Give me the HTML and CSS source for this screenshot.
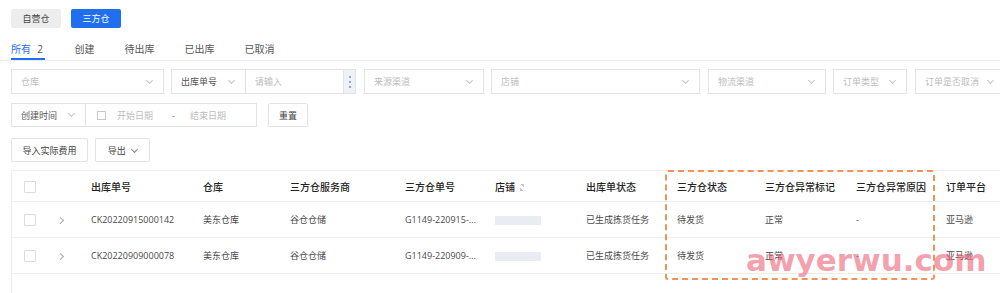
FILE: index.html
```html
<!DOCTYPE html>
<html lang="zh-CN">

<head>
    <meta charset="UTF-8">
    <title>出库单</title>
    <link rel="stylesheet" href="styles.css">
</head>

<body>
    <div class="page">
        <!-- warehouse switch -->
        <div class="switch">
            <button class="sw">自营仓</button>
            <button class="sw active">三方仓</button>
        </div>

        <!-- status tabs -->
        <div class="tabs">
            <span class="tab current">所有 <i class="count">2</i></span>
            <span class="tab">创建</span>
            <span class="tab">待出库</span>
            <span class="tab">已出库</span>
            <span class="tab">已取消</span>
        </div>

        <!-- filters -->
        <div class="filters">
            <div class="field w153"><span class="ph">仓库</span><span class="chev"></span></div>
            <div class="group">
                <div class="field w74 inner"><span class="val">出库单号</span><span class="chev"></span></div>
                <div class="field w98 inner"><span class="ph">请输入</span></div>
                <div class="dots"><b></b><b></b><b></b></div>
            </div>
            <div class="field w120"><span class="ph">来源渠道</span><span class="chev"></span></div>
            <div class="field w209"><span class="ph">店铺</span><span class="chev"></span></div>
            <div class="field w118"><span class="ph">物流渠道</span><span class="chev"></span></div>
            <div class="field w74"><span class="ph">订单类型</span><span class="chev"></span></div>
            <div class="field w90"><span class="ph">订单是否取消</span><span class="chev"></span></div>
        </div>

        <div class="filters second">
            <div class="group">
                <div class="field w74 inner"><span class="ph dark">创建时间</span><span class="chev"></span></div>
                <div class="field range inner">
                    <span class="cal"></span>
                    <span class="ph">开始日期</span>
                    <span class="ph dash">-</span>
                    <span class="ph">结束日期</span>
                </div>
            </div>
            <button class="btn reset">重置</button>
        </div>

        <div class="actions">
            <button class="btn">导入实际费用</button>
            <button class="btn">导出 <span class="chev small"></span></button>
        </div>

        <!-- table -->
        <div class="table-wrap">
            <table class="grid">
                <thead>
                    <tr>
                        <th class="c-check"><span class="box"></span></th>
                        <th class="c-exp"></th>
                        <th class="c1">出库单号</th>
                        <th class="c2">仓库</th>
                        <th class="c3">三方仓服务商</th>
                        <th class="c4">三方仓单号</th>
                        <th class="c5">店铺 <span class="sort"></span></th>
                        <th class="c6">出库单状态</th>
                        <th class="c7">三方仓状态</th>
                        <th class="c8">三方仓异常标记</th>
                        <th class="c9">三方仓异常原因</th>
                        <th class="c10">订单平台</th>
                    </tr>
                </thead>
                <tbody>
                    <tr>
                        <td><span class="box"></span></td>
                        <td><span class="arrow"></span></td>
                        <td>CK20220915000142</td>
                        <td>美东仓库</td>
                        <td>谷仓仓储</td>
                        <td>G1149-220915-...</td>
                        <td><span class="masked"></span></td>
                        <td>已生成拣货任务</td>
                        <td>待发货</td>
                        <td>正常</td>
                        <td>-</td>
                        <td>亚马逊</td>
                    </tr>
                    <tr>
                        <td><span class="box"></span></td>
                        <td><span class="arrow"></span></td>
                        <td>CK20220909000078</td>
                        <td>美东仓库</td>
                        <td>谷仓仓储</td>
                        <td>G1149-220909-...</td>
                        <td><span class="masked"></span></td>
                        <td>已生成拣货任务</td>
                        <td>待发货</td>
                        <td>正常</td>
                        <td>-</td>
                        <td>亚马逊</td>
                    </tr>
                </tbody>
            </table>
            <div class="highlight"></div>
            <div class="watermark">awyerwu.com</div>
        </div>
    </div>
</body>

</html>
```

FILE: styles.css
```css
body {
    margin: 0;
    background: #fff;
    font-family: "Open Sans", "Noto Sans CJK SC", sans-serif;
    font-size: 9px;
    color: #333;
    overflow: hidden;
    height: 293px;
}

.page {
    padding: 9px 0 0 11px;
    width: 1100px;
}

button {
    font-family: inherit;
    font-size: 9px;
    cursor: pointer;
}

/* warehouse switch */
.switch {
    display: flex;
    gap: 10px;
}
.sw {
    width: 50px;
    height: 19px;
    border: none;
    border-radius: 2px;
    background: #ededed;
    color: #444;
    padding: 0;
}
.sw.active {
    background: #1f6ff0;
    color: #fff;
}

/* tabs */
.tabs {
    display: flex;
    gap: 30px;
    height: 20px;
    margin-top: 12px;
    margin-left: -11px;
    padding-left: 11px;
    border-bottom: 1px solid #ececec;
    align-items: center;
    font-size: 10px;
}
.tab {
    color: #555;
    position: relative;
    height: 20px;
    line-height: 18px;
}
.tab.current {
    color: #1f6ff0;
}
.tab.current::after {
    content: "";
    position: absolute;
    left: 0;
    right: 0;
    bottom: 0;
    height: 2px;
    background: #1f6ff0;
}
.count {
    font-style: normal;
    display: inline-block;
    min-width: 9px;
    text-align: center;
    color: #555;
    margin-left: 2px;
}

/* filter rows */
.filters {
    display: flex;
    gap: 7px;
    margin-top: 8px;
    height: 25px;
}
.filters.second {
    margin-top: 9px;
    height: 24px;
    gap: 11px;
}
.field {
    box-sizing: border-box;
    height: 100%;
    border: 1px solid #e3e3e3;
    display: flex;
    align-items: center;
    padding: 0 9px;
    justify-content: space-between;
    flex-shrink: 0;
}
.group {
    display: flex;
    border: 1px solid #e3e3e3;
    box-sizing: border-box;
    height: 100%;
}
.group .inner {
    border: none;
    border-right: 1px solid #e3e3e3;
}
.group .inner:last-of-type {
    border-right: none;
}
.w153 { width: 153px; }
.w74 { width: 74px; }
.w98 { width: 98px; }
.w120 { width: 120px; margin-left: 1px; }
.w209 { width: 209px; }
.w118 { width: 118px; margin-left: 1px; }
.w90 { width: 90px; margin-left: 1px; }

.ph {
    color: #bdbdbd;
}
.ph.dark,
.val {
    color: #555;
}
.chev {
    width: 4px;
    height: 4px;
    border-right: 1px solid #c4c4c4;
    border-bottom: 1px solid #c4c4c4;
    transform: rotate(45deg);
    margin-top: -3px;
    margin-right: 2px;
}
.chev.small {
    display: inline-block;
    margin: 0 0 2px 4px;
    border-color: #888;
}
.dots {
    width: 11px;
    background: #eef2f8;
    display: flex;
    flex-direction: column;
    align-items: center;
    justify-content: center;
    gap: 3px;
}
.dots b {
    width: 2px;
    height: 2px;
    border-radius: 50%;
    background: #6f8fc0;
}

.range {
    width: 170px;
    justify-content: flex-start;
    padding-left: 11px;
}
.cal {
    width: 7px;
    height: 7px;
    border: 1px solid #c9c9c9;
    margin-right: 11px;
}
.dash {
    margin: 0 15px 0 19px;
    color: #777;
}

.btn {
    height: 24px;
    box-sizing: border-box;
    border: 1px solid #e3e3e3;
    background: #fff;
    color: #444;
    padding: 0 10px;
    border-radius: 2px;
}
.reset {
    width: 40px;
    padding: 0;
}

.actions {
    display: flex;
    gap: 7px;
    margin-top: 11px;
    height: 24px;
}
.actions .btn:first-child {
    width: 77px;
    padding: 0;
}
.actions .btn:last-child {
    width: 55px;
    padding: 0;
}

/* table */
.table-wrap {
    position: relative;
    margin-top: 8px;
    height: 140px;
    border-left: 1px solid #ededed;
    border-top: 1px solid #ededed;
}
.grid {
    border-collapse: collapse;
    table-layout: fixed;
    width: 1014px;
}
.grid th,
.grid td {
    text-align: left;
    padding: 0;
    white-space: nowrap;
    overflow: hidden;
    border-bottom: 1px solid #ededed;
}
.grid th {
    height: 30px;
    font-weight: 500;
    font-size: 10px;
    color: #222;
}
.grid td {
    height: 35px;
    color: #4a4a4a;
}
.c-check { width: 46px; }
.c-exp { width: 33px; }
.c1 { width: 112px; }
.c2 { width: 87px; }
.c3 { width: 115px; }
.c4 { width: 90px; }
.c5 { width: 91px; }
.c6 { width: 91px; }
.c7 { width: 88px; }
.c8 { width: 91px; }
.c9 { width: 90px; }
.c10 { width: 80px; }

.box {
    display: inline-block;
    width: 10px;
    height: 10px;
    border: 1px solid #dcdcdc;
    border-radius: 1px;
    margin-left: 12px;
    vertical-align: middle;
}
.arrow {
    display: inline-block;
    width: 4px;
    height: 4px;
    border-right: 1px solid #aaa;
    border-top: 1px solid #aaa;
    transform: rotate(45deg);
    vertical-align: middle;
}
.masked {
    display: inline-block;
    width: 46px;
    height: 9px;
    background: #e9edf3;
    vertical-align: middle;
}
.sort {
    display: inline-block;
    width: 4px;
    height: 7px;
    vertical-align: middle;
    margin-left: 2px;
    background:
        linear-gradient(45deg, transparent 50%, #c6c6c6 50%) top/4px 3px no-repeat,
        linear-gradient(-135deg, transparent 50%, #c6c6c6 50%) bottom/4px 3px no-repeat;
}

/* highlight box drawn over the table */
.highlight {
    position: absolute;
    left: 653px;
    top: -1px;
    width: 266px;
    height: 106px;
    border: 2px dashed #f0935a;
    border-radius: 3px;
}
.watermark {
    position: absolute;
    left: 734px;
    top: 74px;
    font-family: "DejaVu Sans", sans-serif;
    font-weight: bold;
    font-size: 31px;
    line-height: 1;
    color: rgba(238, 95, 118, 0.6);
}
```
